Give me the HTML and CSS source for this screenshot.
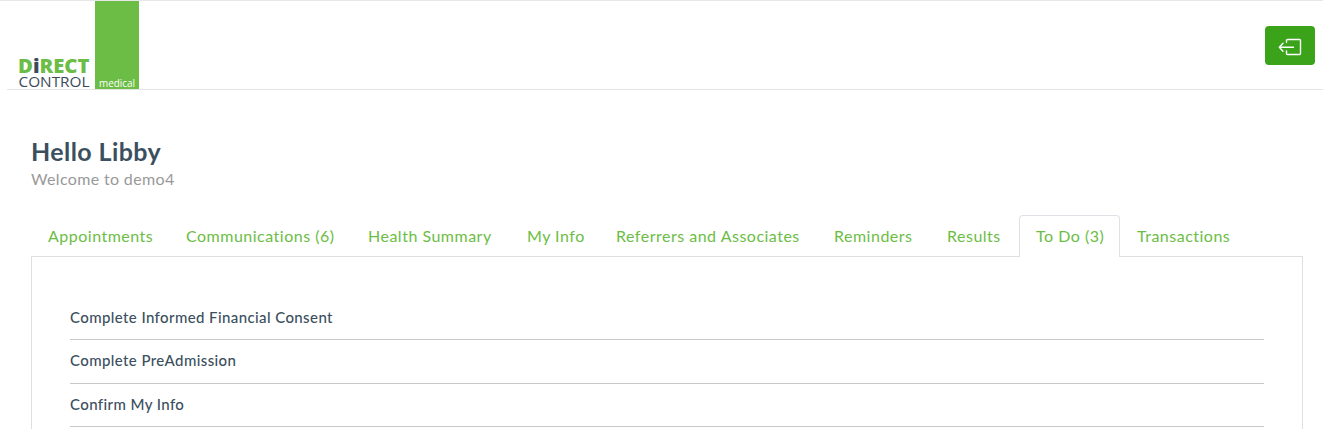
FILE: index.html
```html
<!DOCTYPE html>
<html lang="en">
<head>
    <meta charset="UTF-8">
    <meta name="viewport" content="width=device-width, initial-scale=1.0">
    <title>Direct Control Medical</title>
    <link rel="stylesheet" href="styles.css">
</head>
<body>
    <header class="topbar">
        <a class="logo" href="#">
            <svg width="121" height="88" viewBox="0 0 121 88" role="img" aria-label="Direct Control medical">
                <rect x="77" y="0" width="44" height="88" fill="#6cbd45"/>
                <text class="logo-direct" x="0" y="71.5" textLength="71.5" lengthAdjust="spacingAndGlyphs">D<tspan class="logo-dark">i</tspan>RECT</text>
                <text class="logo-control" x="0.5" y="85.5" textLength="71" lengthAdjust="spacingAndGlyphs">CONTROL</text>
                <text class="logo-medical" x="81" y="85.5" textLength="36" lengthAdjust="spacingAndGlyphs">medical</text>
            </svg>
        </a>
        <button class="logout" aria-label="Log out">
            <svg width="24" height="20" viewBox="0 0 24 20" fill="none" stroke="#fff" stroke-width="1.4" stroke-linecap="round" stroke-linejoin="round">
                <path d="M8.5 5.5V3.5Q8.5 2.5 9.5 2.5H21.5Q22.5 2.5 22.5 3.5V16.5Q22.5 17.5 21.5 17.5H9.5Q8.5 17.5 8.5 16.5V14"/>
                <path d="M15.5 10.3H1.5M5 6.3L1.3 10.3L5 14.3"/>
            </svg>
        </button>
    </header>

    <main>
        <h1>Hello Libby</h1>
        <p class="welcome">Welcome to demo4</p>

        <nav class="tabs">
            <a href="#">Appointments</a>
            <a href="#">Communications (6)</a>
            <a href="#">Health Summary</a>
            <a href="#">My Info</a>
            <a href="#">Referrers and Associates</a>
            <a href="#">Reminders</a>
            <a href="#">Results</a>
            <a class="active" href="#">To Do (3)</a>
            <a href="#">Transactions</a>
        </nav>

        <section class="panel">
            <ul class="todo">
                <li>Complete Informed Financial Consent</li>
                <li>Complete PreAdmission</li>
                <li>Confirm My Info</li>
            </ul>
        </section>
    </main>
</body>
</html>
```
FILE: styles.css
```css
* {
    margin: 0;
    padding: 0;
    box-sizing: border-box;
}

body {
    font-family: Lato, "Open Sans", sans-serif;
    font-size: 16px;
    line-height: 24px;
    color: #3b4f5e;
    background: #fff;
    border-top: 1px solid #e7e7e7;
}

.topbar {
    display: flex;
    justify-content: space-between;
    align-items: center;
    height: 89px;
    margin-left: 7px;
    padding: 0 8px 0 11px;
    border-bottom: 1px solid #e5e5e5;
}

.logo svg {
    display: block;
    overflow: visible;
}

.logo text {
    font-family: "Open Sans", sans-serif;
}

.logo-direct {
    font-size: 20px;
    font-weight: 800;
    fill: #6cbd45;
}

.logo-dark,
.logo-control {
    fill: #3b4a59;
}

.logo-control {
    font-size: 15px;
}

.logo-medical {
    font-size: 10px;
    fill: #fff;
}

.logout {
    display: flex;
    align-items: center;
    justify-content: center;
    width: 50px;
    height: 39px;
    padding-top: 3px;
    background: #3aa31a;
    border: 0;
    border-radius: 4px;
}

main {
    padding: 45px 20px 0 31px;
}

h1 {
    font-size: 25px;
    font-weight: 700;
    line-height: 32px;
    letter-spacing: 0.4px;
}

.welcome {
    color: #999;
    letter-spacing: 0.35px;
}

.tabs {
    display: grid;
    grid-template-columns: 138px 182px 159px 89px 218px 113px 89px 101px 130px;
    height: 42px;
    margin-top: 24px;
}

.tabs a {
    height: 42px;
    padding: 8px 16px;
    border: 1px solid transparent;
    color: #6cbd45;
    letter-spacing: 0.5px;
    text-decoration: none;
    white-space: nowrap;
}

.tabs .active {
    position: relative;
    background: #fff;
    border-color: #dee2e6;
    border-bottom: 0;
    border-radius: 4px 4px 0 0;
}

.panel {
    height: 173px;
    margin-top: -1px;
    padding: 39.9px 38px 0;
    border: 1px solid #dedfe3;
    border-bottom: 0;
}

.todo {
    list-style: none;
}

.todo li {
    height: 43.5px;
    padding-top: 8px;
    border-bottom: 1px solid #c8c8c8;
    font-size: 15px;
    font-weight: 500;
    letter-spacing: 0.4px;
}
```
